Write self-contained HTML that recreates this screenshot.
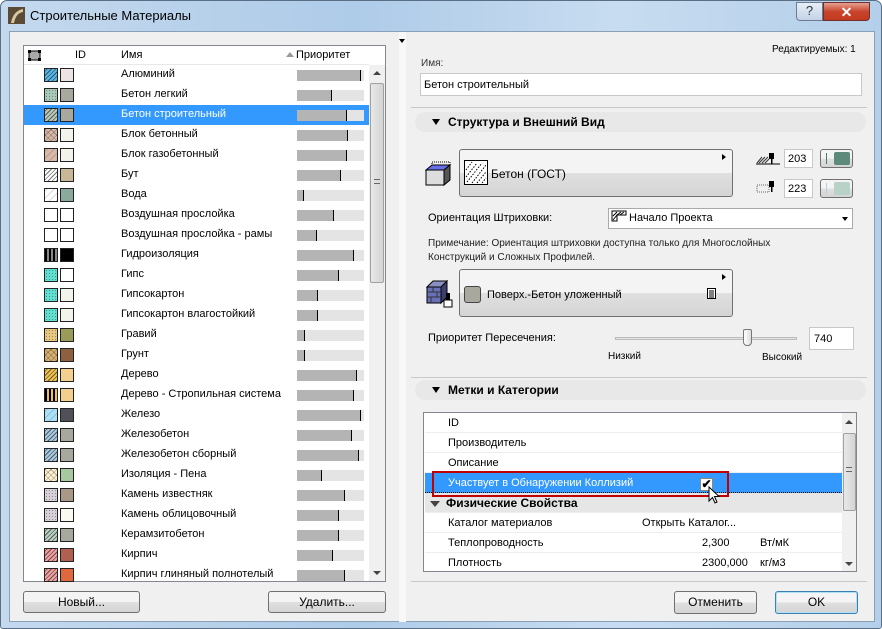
<!DOCTYPE html>
<html><head><meta charset="utf-8"><style>
*{box-sizing:border-box;margin:0;padding:0}
body{width:882px;height:629px;overflow:hidden;font-family:"Liberation Sans",sans-serif;font-size:11px;color:#000;background:#fff}
.win{position:absolute;left:0;top:0;width:882px;height:629px;background:linear-gradient(90deg,#c4d9ee,#aecbe8 40%,#c7dcf0 70%,#b4cfea);border:1px solid #5a6f86;border-radius:7px 7px 3px 3px}
.title{position:absolute;left:29px;top:7px;font-size:13px;color:#000}
.client{position:absolute;left:8px;top:30px;width:866px;height:591px;background:#f0f0f0;border:1px solid #8aa0b8}
.a{position:absolute}
.btn{position:absolute;border:1px solid #707070;border-radius:3px;background:linear-gradient(#f4f4f4 50%,#e0e0e0 50%,#d4d4d4);text-align:center;font-size:12px;line-height:20px}
.list{left:22px;top:44px;width:363px;height:537px;background:#fff;border:1px solid #828790}
.row{position:absolute;left:0;width:345px;height:20px}
.row span{position:absolute;left:97px;top:3px;font-size:11px}
.sw{position:absolute;top:3px;width:14px;height:14px;border:1px solid #222}
.bar{position:absolute;left:273px;top:5px;width:67px;height:11px;background:#e4e4e4}
.bar i{position:absolute;left:0;top:0;height:11px;background:#b4b4b4;border-right:1px solid #000}
.sel{background:#3399ff;color:#fff}
.inp{position:absolute;background:#fff;border:1px solid #c8c8c8}
.sec{position:absolute;left:414px;width:451px;height:20px;border-radius:10px;background:#e8e8e8;font-weight:bold;font-size:12px}
.sec b{position:absolute;left:33px;top:3px}
.tri{position:absolute;width:0;height:0;border-left:4px solid transparent;border-right:4px solid transparent;border-top:6px solid #000}
.tr{position:absolute;left:1px;width:417px;height:20px;border-bottom:1px solid #eee;font-size:11px}
.tr span{position:absolute;top:4px}
</style></head><body>
<div class="win">
<svg class="a" style="left:7px;top:6px" width="17" height="17"><rect width="17" height="17" fill="#5a4a36"/><path d="M3 16 Q5 4 15 2 L15 5 Q8 6 6 16Z" fill="#d8c8a0"/></svg>
<div class="title">Строительные Материалы</div>
<div class="a" style="left:795px;top:1px;width:27px;height:19px;border:1px solid #6c7c90;border-radius:0 0 0 4px;background:linear-gradient(#e6eef8,#c3d3e6);text-align:center;font-size:13px;color:#333">?</div>
<div class="a" style="left:822px;top:1px;width:47px;height:19px;border:1px solid #6c3030;border-radius:0 0 4px 0;background:linear-gradient(#e8a090,#c8442c 50%,#c43a20);text-align:center;font-size:14px;font-weight:bold;color:#fff;line-height:18px">✕</div>
<div class="client"></div>
<div class="a" style="left:398px;top:31px;width:7px;height:590px;background:#f8f8f8"></div>
<div class="tri" style="left:398px;top:38px;border-width:4px 3px 0"></div>

<div class="a list" id="list">
 <div class="a" style="left:0;top:0;width:345px;height:19px;background:#fff;border-bottom:1px solid #e8e8e8"></div>
 <svg class="a" style="left:4px;top:4px" width="13" height="11"><rect x="1" y="1" width="11" height="9" fill="#aaa" stroke="#000"/><rect x="0" y="0" width="3" height="3"/><rect x="10" y="0" width="3" height="3"/><rect x="0" y="8" width="3" height="3"/><rect x="10" y="8" width="3" height="3"/></svg>
 <div class="a" style="left:51px;top:3px">ID</div>
 <div class="a" style="left:97px;top:3px">Имя</div>
 <div class="tri" style="left:262px;top:6px;border-width:0 4px 5px;border-bottom:5px solid #999;border-top:none"></div>
 <div class="a" style="left:272px;top:3px">Приоритет</div>
 <div class="a" style="left:345px;top:19px;width:16px;height:516px;background:#f0f0f0"></div>
 <div class="a" style="left:346px;top:37px;width:14px;height:200px;background:linear-gradient(90deg,#e8e8e8,#d4d4d4);border:1px solid #a0a0a0;border-radius:2px"></div>
 <div class="a" style="left:350px;top:133px;width:6px;height:5px;border-top:1px solid #666;border-bottom:1px solid #666"></div>
 <div class="tri" style="left:349px;top:25px;border-width:0 4px 4px;border-bottom:4px solid #444;border-top:none"></div>
 <div class="tri" style="left:349px;top:525px;border-width:4px 4px 0;border-top-color:#444"></div>
</div>
<div class="btn" style="left:22px;top:590px;width:117px;height:22px">Новый...</div>
<div class="btn" style="left:267px;top:590px;width:118px;height:22px">Удалить...</div>

<div class="a" style="left:771px;top:43px;font-size:10px">Редактируемых: 1</div>
<div class="a" style="left:420px;top:57px;font-size:10px;color:#333">Имя:</div>
<div class="inp" style="left:419px;top:72px;width:442px;height:23px;padding:5px 3px;font-size:11px">Бетон строительный</div>
<div class="a" style="left:410px;top:106px;width:456px;height:1px;background:#c8c8c8"></div>
<div class="sec" style="top:111px"><div class="tri" style="left:17px;top:7px"></div><b>Структура и Внешний Вид</b></div>

<svg class="a" style="left:424px;top:160px" width="27" height="26"><rect x="7" y="1" width="18" height="8" fill="none" stroke="#000" stroke-dasharray="1,1"/><path d="M1 9 L7 4 L25 4 L19 9Z" fill="#6670e8" stroke="#000"/><path d="M1 9 H19 V24 H1Z" fill="#ddd" stroke="#000"/><path d="M19 9 L25 4 V19 L19 24Z" fill="#555" stroke="#000"/></svg>
<div class="btn" style="left:458px;top:148px;width:274px;height:48px"></div>
<div class="tri" style="left:721px;top:153px;border-width:3px 0 3px 4px;border-color:transparent transparent transparent #000;border-style:solid"></div>
<svg class="a" style="left:463px;top:159px" width="24" height="25"><rect x=".5" y=".5" width="23" height="24" fill="#fff" stroke="#000"/><path d="M2 10 L8 2 M2 17 L13 3 M3 22 L18 3 M8 23 L22 5 M13 23 L22 12 M18 23 L22 18" stroke="#000" stroke-dasharray="1.5,1.5"/></svg>
<div class="a" style="left:490px;top:166px;font-size:12px">Бетон (ГОСТ)</div>
<svg class="a" style="left:755px;top:150px" width="24" height="14"><path d="M1 12 L6 6 M3 12 L9 6 M6 12 L12 6 M9 12 L13 8" stroke="#333"/><rect x="13" y="2" width="5" height="6"/><rect x="15" y="8" width="1.5" height="5"/><path d="M0 13 H24" stroke="#000"/></svg>
<svg class="a" style="left:755px;top:178px" width="24" height="14"><rect x="1" y="6" width="12" height="7" fill="none" stroke="#666" stroke-dasharray="1,1"/><rect x="13" y="2" width="5" height="6"/><rect x="15" y="8" width="1.5" height="5"/></svg>
<div class="inp" style="left:783px;top:148px;width:29px;height:19px;padding:3px;font-size:11px">203</div>
<div class="inp" style="left:783px;top:178px;width:29px;height:19px;padding:3px;font-size:11px">223</div>
<div class="btn" style="left:819px;top:148px;width:33px;height:19px"><div class="a" style="left:5px;top:3px;width:1px;height:11px;background:#4a7a6a"></div><div class="a" style="left:13px;top:2px;width:16px;height:13px;background:#5e8a7c;border-radius:2px"></div></div>
<div class="btn" style="left:819px;top:178px;width:33px;height:19px"><div class="a" style="left:5px;top:3px;width:1px;height:11px;background:#bcd"></div><div class="a" style="left:13px;top:2px;width:16px;height:13px;background:#b8d2c8;border-radius:2px"></div></div>

<div class="a" style="left:427px;top:211px;font-size:11px">Ориентация Штриховки:</div>
<div class="inp" style="left:607px;top:207px;width:245px;height:21px;border-color:#aaa"></div>
<svg class="a" style="left:610px;top:209px" width="16" height="12"><path d="M1 11 V1 H15 V5 H6 V11Z" fill="#fff" stroke="#000"/><path d="M2 10 L6 5 M2 6 L6 2 M6 5 L10 2 M9 5 L13 2" stroke="#000"/></svg>
<div class="a" style="left:628px;top:211px;font-size:11px">Начало Проекта</div>
<div class="tri" style="left:841px;top:216px;border-width:4px 3.5px 0"></div>
<div class="a" style="left:427px;top:236px;font-size:10px;color:#222;line-height:14px">Примечание: Ориентация штриховки доступна только для Многослойных<br>Конструкций и Сложных Профилей.</div>

<svg class="a" style="left:425px;top:279px" width="28" height="28"><path d="M1 7 L7 1 H21 L15 7Z" fill="#8890c0" stroke="#000"/><path d="M1 7 H15 V23 H1Z" fill="#6870b8" stroke="#000"/><path d="M15 7 L21 1 V17 L15 23Z" fill="#3a3f70" stroke="#000"/><path d="M1 12 H15 M1 17 H15 M7 7 V12 M11 12 V17 M5 17 V23" stroke="#333"/><rect x="18" y="20" width="8" height="7" fill="#fff" stroke="#000"/><rect x="20" y="13" width="4" height="7"/></svg>
<div class="btn" style="left:458px;top:268px;width:274px;height:48px"></div>
<div class="tri" style="left:721px;top:273px;border-width:3px 0 3px 4px;border-color:transparent transparent transparent #000;border-style:solid"></div>
<div class="a" style="left:463px;top:285px;width:17px;height:17px;background:#a8a89e;border:1px solid #444;border-radius:3px"></div>
<div class="a" style="left:486px;top:288px;font-size:11px">Поверх.-Бетон уложенный</div>
<svg class="a" style="left:706px;top:287px" width="9" height="11"><rect x=".5" y=".5" width="8" height="10" fill="#fff" stroke="#000"/><path d="M2 3 H7 M2 5 H7 M2 7 H7 M2 9 H7" stroke="#000"/></svg>

<div class="a" style="left:427px;top:331px;font-size:11px">Приоритет Пересечения:</div>
<div class="a" style="left:614px;top:336px;width:182px;height:3px;border:1px solid #bbb;background:#e4e4e4"></div>
<div class="a" style="left:742px;top:328px;width:9px;height:17px;background:linear-gradient(90deg,#fff,#ddd);border:1px solid #777;border-radius:2px 2px 4px 4px"></div>
<div class="inp" style="left:808px;top:326px;width:45px;height:23px;padding:5px 4px;font-size:11px">740</div>
<div class="a" style="left:607px;top:350px;font-size:10px">Низкий</div>
<div class="a" style="left:761px;top:351px;font-size:10px">Высокий</div>
<div class="a" style="left:410px;top:376px;width:456px;height:1px;background:#c8c8c8"></div>
<div class="sec" style="top:379px"><div class="tri" style="left:17px;top:7px"></div><b>Метки и Категории</b></div>

<div class="a" style="left:422px;top:411px;width:434px;height:160px;background:#fff;border:1px solid #828790;overflow:hidden">
 <div class="tr" style="top:0"><span style="left:23px">ID</span></div>
 <div class="tr" style="top:20px"><span style="left:23px">Производитель</span></div>
 <div class="tr" style="top:40px"><span style="left:23px">Описание</span></div>
 <div class="tr" style="top:60px;background:#3399ff;color:#fff;border-bottom:1px dotted #000"><span style="left:23px">Участвует в Обнаружении Коллизий</span></div>
 <div class="tr" style="top:80px;background:#e6e6e6;font-weight:bold;font-size:12px"><span style="left:21px;top:3px">Физические Свойства</span></div>
 <div class="tri" style="left:6px;top:88px;border-width:6px 5px 0;border-top-color:#444"></div>
 <div class="tr" style="top:100px"><span style="left:23px">Каталог материалов</span><span style="left:217px">Открыть Каталог...</span></div>
 <div class="tr" style="top:120px"><span style="left:23px">Теплопроводность</span><span style="left:277px">2,300</span><span style="left:335px">Вт/мК</span></div>
 <div class="tr" style="top:140px"><span style="left:23px">Плотность</span><span style="left:277px">2300,000</span><span style="left:335px">кг/м3</span></div>
 <div class="a" style="left:418px;top:0;width:15px;height:160px;background:#f0f0f0"></div>
 <div class="a" style="left:419px;top:20px;width:13px;height:78px;background:linear-gradient(90deg,#e8e8e8,#d4d4d4);border:1px solid #a0a0a0;border-radius:2px"></div>
 <div class="a" style="left:422px;top:54px;width:6px;height:5px;border-top:1px solid #666;border-bottom:1px solid #666"></div>
 <div class="tri" style="left:421px;top:7px;border-width:0 4px 4px;border-bottom:4px solid #444;border-top:none"></div>
 <div class="tri" style="left:421px;top:149px;border-width:4px 4px 0;border-top-color:#444"></div>
</div>
<div class="a" style="left:431px;top:470px;width:297px;height:26px;border:2px solid #c00000"></div>
<div class="a" style="left:699px;top:477px;width:13px;height:13px;background:#fff;border:1px solid #8a8a7a;font-size:12px;line-height:11px;font-weight:bold;text-align:center">✔</div>
<svg class="a" style="left:707px;top:485px" width="12" height="19"><path d="M1 1 V15 L4.5 11.5 L7 17 L9 16 L6.5 10.5 H11Z" fill="#fff" stroke="#000"/></svg>
<div class="a" style="left:410px;top:580px;width:456px;height:1px;background:#c8c8c8"></div>
<div class="btn" style="left:673px;top:590px;width:83px;height:23px">Отменить</div>
<div class="btn" style="left:774px;top:590px;width:83px;height:23px;border-color:#3c7fb1;box-shadow:inset 0 0 0 1px #aee0f8">OK</div>
</div>
<script>
var d=[["Алюминий","#5ab8e8","h","#ece4e4",.95],["Бетон легкий","#a8c8b8","d","#a8a89e",.52],["Бетон строительный","#b8c8b8","h","#a8a89e",.75],["Блок бетонный","#d8b8a8","x","#f2f4ec",.76],["Блок газобетонный","#d8b8a8","s","#f2f4ec",.75],["Бут","#fff","h","#c8b898",.65],["Вода","#fff","s","#8aaa9e",.1],["Воздушная прослойка","#fff","","#fff",.55],["Воздушная прослойка - рамы","#fff","","#fff",.3],["Гидроизоляция","#888","v","#000",.85],["Гипс","#60e0d0","d","#fff",.62],["Гипсокартон","#60e0d0","d","#f2f4ec",.32],["Гипсокартон влагостойкий","#60e0d0","d","#f2f4ec",.32],["Гравий","#e8c880","d","#9a9a5a",.12],["Грунт","#d8b070","x","#8c6040",.12],["Дерево","#f0c050","h","#f4d090",.9],["Дерево - Стропильная система","#f0c050","v","#f4d090",.85],["Железо","#a8e0f8","s","#505058",.95],["Железобетон","#a8c8e0","h","#a8a89e",.82],["Железобетон сборный","#a8c8e0","h","#a8a89e",.92],["Изоляция - Пена","#fff0d0","x","#a8c8a0",.38],["Камень известняк","#d8d0d8","d","#a89888",.71],["Камень облицовочный","#d8d0d8","d","#fafaf0",.63],["Керамзитобетон","#b8d0c0","h","#a8a89e",.62],["Кирпич","#f0a0a0","h","#b06050",.54],["Кирпич глиняный полнотелый","#f0a0a0","h","#e06840",.72]];
var L=document.getElementById('list'),h='';
d.forEach(function(r,i){var pat=r[2]=="h"?"repeating-linear-gradient(-45deg,#0008 0 0.8px,transparent 0.8px 3px),":r[2]=="v"?"repeating-linear-gradient(90deg,#000 0 2px,transparent 2px 4px),":r[2]=="x"?"repeating-linear-gradient(45deg,#0004 0 0.8px,transparent 0.8px 4px),repeating-linear-gradient(-45deg,#0004 0 0.8px,transparent 0.8px 4px),":r[2]=="d"?"radial-gradient(#0005 0.5px,transparent 0.7px) 0 0/3px 3px,":r[2]=="s"?"repeating-linear-gradient(-45deg,#0003 0 0.8px,transparent 0.8px 5px),":"";
h+='<div class="row'+(i==2?' sel':'')+'" style="top:'+(19+i*20)+'px"><div class="sw" style="left:20px;background:'+pat+r[1]+'"></div><div class="sw" style="left:36px;background:'+r[3]+'"></div><span>'+r[0]+'</span><div class="bar"><i style="width:'+Math.round(r[4]*67)+'px"></i></div></div>';});
L.insertAdjacentHTML('beforeend',h);
</script>
</body></html>
